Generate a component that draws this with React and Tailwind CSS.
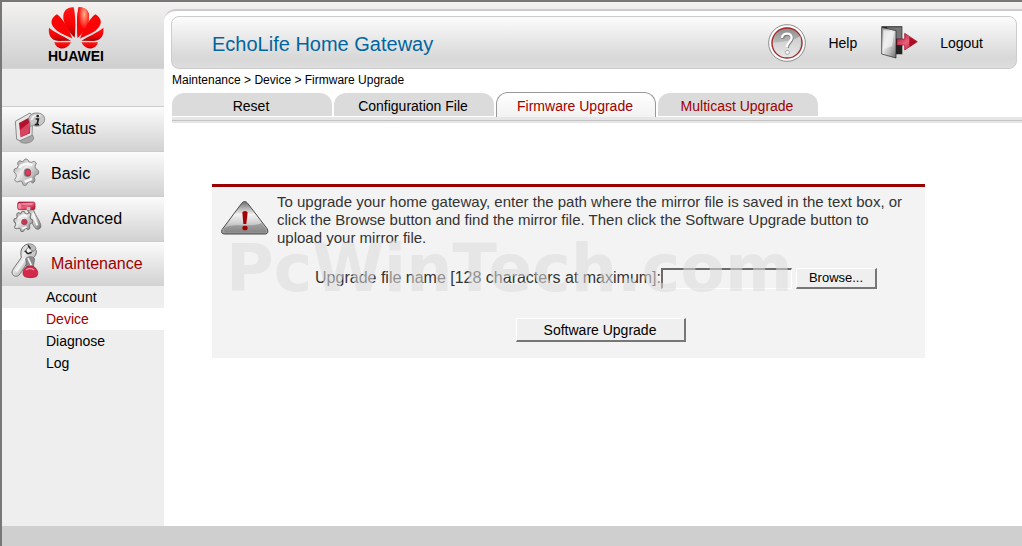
import { useState } from 'react'

const SUB_ITEMS = ['Account', 'Device', 'Diagnose', 'Log']

const TABS = ['Reset', 'Configuration File', 'Firmware Upgrade', 'Multicast Upgrade']

const GEAR = 'M71 183 Q78 174 85 183 L87 188 L94 189 Q104 182 109 191 L105 202 L108 209 Q119 212 115 224 L106 228 L103 235 Q108 247 98 251 L91 246 L84 249 Q78 264 69 256 L66 247 L60 245 Q48 252 44 241 L49 232 L48 225 Q38 218 43 209 L52 206 L55 199 Q49 188 60 184 L68 188 Z'

function Defs() {
  return (
    <svg className="absolute w-0 h-0" aria-hidden="true">
      <defs>
        <linearGradient id="steel" x1="0" y1="0" x2="1" y2="1">
          <stop offset="0" stopColor="#8c8c8c" />
          <stop offset="0.4" stopColor="#ededed" />
          <stop offset="0.7" stopColor="#b5b5b5" />
          <stop offset="1" stopColor="#6a6a6a" />
        </linearGradient>
        <linearGradient id="ruby" x1="0" y1="0" x2="1" y2="1">
          <stop offset="0" stopColor="#a8102f" />
          <stop offset="0.5" stopColor="#e8607c" />
          <stop offset="1" stopColor="#b00c2c" />
        </linearGradient>
        <linearGradient id="petal" x1="0" y1="0" x2="0" y2="1">
          <stop offset="0" stopColor="#fb1a1a" />
          <stop offset="0.6" stopColor="#f80000" />
          <stop offset="1" stopColor="#9c0b0b" />
        </linearGradient>
        <radialGradient id="glow" cx="0.6" cy="0.22" r="0.5">
          <stop offset="0" stopColor="#ffb38a" />
          <stop offset="1" stopColor="#fa0505" />
        </radialGradient>
        <linearGradient id="glass" x1="0" y1="0" x2="0" y2="1">
          <stop offset="0" stopColor="#8a8a8a" />
          <stop offset="0.6" stopColor="#c9c9c9" />
          <stop offset="1" stopColor="#ededed" />
        </linearGradient>
        <linearGradient id="warn" x1="0" y1="0" x2="0" y2="1">
          <stop offset="0" stopColor="#6e6e6e" />
          <stop offset="0.4" stopColor="#f2f2f2" />
          <stop offset="0.65" stopColor="#d2d2d2" />
          <stop offset="1" stopColor="#8b8b8b" />
        </linearGradient>
      </defs>
    </svg>
  )
}

function Petals({ top }) {
  return (
    <>
      <path d="M222 112 C226 80 224 40 219 21 C199 20 186 32 188 54 C190 74 206 98 222 112 Z" fill={top} />
      <path d="M215 115 C205 86 186 54 169 42 C152 52 148 66 158 80 C170 98 200 106 215 115 Z" fill="#fa0505" />
      <path d="M211 121 C190 108 162 96 145 82 C142 102 150 120 174 122 Z" fill="url(#petal)" />
      <path d="M211 126 L161 126 C166 144 184 149 197 141 C204 137 208 131 211 126 Z" fill="url(#petal)" />
    </>
  )
}

function Logo() {
  return (
    <a href="#home" className="flex flex-col items-center w-[148px] font-bold text-sm leading-3 text-black">
      <svg width="56" height="42" viewBox="142 17 168 126" className="overflow-visible" aria-hidden="true">
        <Petals top="url(#petal)" />
        <g transform="translate(453 0) scale(-1 1)">
          <Petals top="#fa0505" />
        </g>
        <path d="M231 112 C227 80 229 40 234 21 C254 20 267 32 265 54 C263 74 247 98 231 112 Z" fill="url(#glow)" />
      </svg>
      <span className="mt-0.5">HUAWEI</span>
    </a>
  )
}

function StatusIcon() {
  return (
    <svg width="37" height="37" viewBox="30 32 111 111" className="overflow-visible" aria-hidden="true">
      <path d="M58 120 C56 130 72 134 86 130 C100 126 104 118 98 108 L84 104 Z" fill="#a6a6a6" stroke="#777" strokeWidth="2" />
      <path d="M46 66 L90 41 L98 50 L96 108 L60 124 L50 120 Z" fill="#e6e6e6" stroke="#8a8a8a" strokeWidth="3" />
      <path d="M57 71 L92 52 L90 102 L62 114 Z" fill="#b3122f" />
      <path d="M60 92 L90 68 L88 101 L63 112 Z" fill="#d84560" />
      <path d="M90 82 L90 70 C80 54 92 40 112 41 C130 42 138 54 132 68 C126 80 108 84 99 77 Z" fill="#c8c8c8" stroke="#8e8e8e" strokeWidth="3" />
      <path d="M95 62 C97 48 108 46 122 49" fill="none" stroke="#f3f3f3" strokeWidth="5" />
      <path d="M107 59 H115 L111 76 M104 76 H117" fill="none" stroke="#1c1c1c" strokeWidth="5" />
      <circle cx="113" cy="50" r="4" fill="#1c1c1c" />
    </svg>
  )
}

function BasicIcon() {
  return (
    <svg width="37" height="37" viewBox="30 167 111 111" className="overflow-visible" aria-hidden="true">
      <path d={GEAR} fill="url(#steel)" stroke="#858585" strokeWidth="3" />
      <path d="M58 206 C64 194 82 190 96 198" fill="none" stroke="#fafafa" strokeWidth="7" />
      <path d="M74 247 L96 238" stroke="#f5f5f5" strokeWidth="8" />
      <ellipse cx="82" cy="220" rx="11" ry="13" fill="#8a8a8a" />
      <ellipse cx="84" cy="220" rx="8" ry="10" fill="#d8405c" stroke="#a5203c" strokeWidth="2" />
    </svg>
  )
}

function AdvancedIcon() {
  return (
    <svg width="37" height="37" viewBox="30 302 111 111" className="overflow-visible" aria-hidden="true">
      <path d="M82 330 C90 322 100 326 102 336 C106 348 118 362 122 376 C124 388 116 392 108 388 C100 382 94 366 90 350 Z" fill="url(#steel)" stroke="#777" strokeWidth="3" />
      <path d="M98 342 L112 378" stroke="#f5f5f5" strokeWidth="6" />
      <rect x="53" y="308" width="52" height="23" rx="5" fill="url(#ruby)" stroke="#a01030" strokeWidth="2" />
      <path d="M64 314 H98" stroke="#f4a3b3" strokeWidth="4" />
      <ellipse cx="59" cy="320" rx="5" ry="9" fill="#f08a9d" />
      <rect x="80" y="323" width="11" height="9" fill="#c4c4c4" />
      <g transform="translate(10 200) scale(0.76)">
        <path d={GEAR} fill="url(#steel)" stroke="#777" strokeWidth="4" />
        <path d="M58 208 C66 194 84 192 94 200 M74 247 L92 240" fill="none" stroke="#f8f8f8" strokeWidth="7" />
        <circle cx="83" cy="221" r="11" fill="#cf3450" stroke="#8d4050" strokeWidth="3" />
      </g>
    </svg>
  )
}

function MaintenanceIcon() {
  return (
    <svg width="37" height="37" viewBox="30 437 111 111" className="overflow-visible" aria-hidden="true">
      <path d="M84 434 L90 438 L78 452 L80 462 L92 464 L103 446 L109 454 C110 468 102 478 88 480 C82 488 68 516 56 528 C48 534 36 530 36 518 C38 508 56 488 64 474 C60 456 64 438 84 434 Z" fill="url(#steel)" stroke="#6e6e6e" strokeWidth="3" />
      <path d="M84 434 C96 432 106 438 108 448 L101 456 L92 452 L86 444 Z" fill="#bdbdbd" stroke="#6e6e6e" strokeWidth="2" />
      <path d="M48 516 L76 476" stroke="#f0f0f0" strokeWidth="9" />
      <path d="M74 454 L84 463 L95 458 M84 438 L92 448" fill="none" stroke="#222" strokeWidth="4" />
      <path d="M77 478 C84 470 98 470 104 478 L100 504 H80 Z" fill="#8b8b8b" stroke="#666" strokeWidth="2" />
      <path d="M84 476 L94 498" stroke="#f5f5f5" strokeWidth="5" />
      <path d="M78 504 C84 499 98 499 104 504 C115 512 116 528 108 532 C98 536 80 536 73 531 C66 524 69 510 78 504 Z" fill="#d42a4a" stroke="#a11030" strokeWidth="2" />
      <path d="M78 512 C84 506 96 506 102 512" fill="none" stroke="#f08ea0" strokeWidth="5" />
    </svg>
  )
}

function HelpIcon() {
  return (
    <svg width="38" height="38" viewBox="57 74 114 114" aria-hidden="true">
      <circle cx="114" cy="131" r="55" fill="#fff" stroke="#8d8d8d" strokeWidth="3" />
      <circle cx="114" cy="131" r="48" fill="#ddd" />
      <circle cx="114" cy="131" r="45" fill="url(#glass)" stroke="#a52a2a" strokeWidth="4" />
      <path d="M72 130 C92 128 130 128 154 110 C162 140 140 172 114 173 C90 172 72 154 72 130 Z" fill="#e4e4e4" opacity="0.6" />
      <path d="M101 118 C102 101 130 101 129 117 C129 129 116 129 115 146" fill="none" stroke="#777" strokeWidth="9" />
      <path d="M99 116 C100 98 129 99 128 115 C128 127 114 128 113 145" fill="none" stroke="#fff" strokeWidth="7" />
      <circle cx="115" cy="159" r="6" fill="#fff" stroke="#888" strokeWidth="2" />
    </svg>
  )
}

function LogoutIcon() {
  return (
    <svg width="37" height="33" viewBox="395 80 111 99" aria-hidden="true">
      <path d="M396 81 H459 V165 H430 Z" fill="#222" />
      <path d="M412 84 H457 V118 H440 Z" fill="#777" />
      <path d="M397 84 L440 94 V176 L397 164 Z" fill="url(#steel)" stroke="#222" strokeWidth="2" />
      <path d="M402 92 L434 99 L428 140 L402 150 Z" fill="#f0f0f0" opacity="0.8" />
      <path d="M443 119 H466 V102 L504 127 L466 152 V137 H443 Z" fill="url(#ruby)" stroke="#a30d22" strokeWidth="2" />
      <path d="M480 112 L503 127 L480 143 Z" fill="#ad0d20" />
    </svg>
  )
}

function WarningIcon() {
  return (
    <svg width="48" height="34" viewBox="62 80 144 102" className="shrink-0" aria-hidden="true">
      <path d="M124 87 Q133 76 142 87 L201 164 Q206 177 196 179 H72 Q60 178 65 166 Z" fill="url(#warn)" stroke="#4b4b4b" strokeWidth="3" />
      <path d="M72 162 C92 144 160 160 184 146 L197 166 Q200 174 190 174 H76 Q68 172 72 162 Z" fill="#777" opacity="0.5" />
      <path d="M126 114 Q134 106 142 114 L138 149 H129 Z" fill="#a80000" />
      <ellipse cx="134" cy="161" rx="8" ry="7" fill="#a80000" />
    </svg>
  )
}

const MENU = [
  { name: 'Status', Icon: StatusIcon },
  { name: 'Basic', Icon: BasicIcon },
  { name: 'Advanced', Icon: AdvancedIcon },
  { name: 'Maintenance', Icon: MaintenanceIcon },
]

function Sidebar() {
  return (
    <aside className="w-[162px] shrink-0 bg-[#eeeeee]">
      <div className="h-[67px] pt-1 bg-linear-to-b from-[#f3f2f1] to-[#cfcfcf] border-b border-[#d6d6d6]">
        <Logo />
      </div>
      <nav className="mt-[37px]">
        {MENU.map(({ name, Icon }) => (
          <a key={name} href={`#${name.toLowerCase()}`}
            className={`flex items-center gap-1 h-[45px] pl-2 pb-px border-t border-[#cccccc] bg-linear-to-b from-[#fbfbfb] to-[#d2d2d2] text-base ${
              name === 'Maintenance' ? 'text-[#a00000]' : 'text-black'
            }`}>
            <Icon />
            {name}
          </a>
        ))}
        <ul>
          {SUB_ITEMS.map(item => (
            <li key={item}>
              <a href={`#${item.toLowerCase()}`}
                className={`block pl-11 text-sm leading-[22px] ${item === 'Device' ? 'bg-white text-[#a00000]' : 'text-black'}`}>
                {item}
              </a>
            </li>
          ))}
        </ul>
      </nav>
    </aside>
  )
}

function Tabs() {
  return (
    <div>
      <nav className="flex items-end gap-0.5 h-[25px]">
        {TABS.map((tab, i) => (
          <a key={tab} href={`#tab-${i + 1}`}
            className={`w-40 pr-0.5 text-center text-sm ${
              tab === 'Firmware Upgrade'
                ? 'h-[25px] leading-[26px] rounded-t-xl border border-b-0 border-[#999999] bg-linear-to-b from-white to-[#f2f2f2] text-[#a00000]'
                : 'h-6 leading-[26px] rounded-t-xl bg-[#dbdbdb] border-b border-white'
            } ${tab === 'Multicast Upgrade' ? 'text-[#a00000]' : ''}`}>
            {tab}
          </a>
        ))}
      </nav>
      <div className="h-1.5 border-t-3 border-b-2 border-[#e6e6e6] bg-[#c4c4c4]" />
    </div>
  )
}

function UpgradeForm() {
  const [fileName, setFileName] = useState('')

  return (
    <form onSubmit={e => e.preventDefault()}
      className="relative mt-[61px] ml-10 mr-[97px] pb-4 border-t-3 border-[#990000] bg-[#f3f3f3] text-[#333333]">
      <div className="flex pt-[6px] pl-[9px] pr-4 gap-2">
        <div className="pt-2">
          <WarningIcon />
        </div>
        <p className="text-[15px] leading-[18px]">
          To upgrade your home gateway, enter the path where the mirror file is saved in the text box, or click
          the Browse button and find the mirror file. Then click the Software Upgrade button to upload your
          mirror file.
        </p>
      </div>
      <div className="flex items-center justify-end pr-12 mt-5">
        <label htmlFor="upgrade-file" className="text-base leading-[22px] whitespace-nowrap">
          Upgrade file name [128 characters at maximum]:
        </label>
        <input id="upgrade-file" type="text" value={fileName} onChange={e => setFileName(e.target.value)}
          className="w-[131px] h-[21px] px-1 text-sm bg-[#f3f3f3] border-t-2 border-l-2 border-b border-r border-t-[#6b6b6b] border-l-[#6b6b6b] border-b-white border-r-white outline-none" />
        <button type="button"
          className="w-[81px] h-[21px] ml-1 bg-[#efefef] border-t border-l border-b-2 border-r-2 border-t-white border-l-white border-b-[#777777] border-r-[#777777] text-[13px] leading-4 text-black">
          Browse...
        </button>
      </div>
      <div className="flex justify-center pl-16 mt-[29px]">
        <button type="submit"
          className="w-[170px] h-6 bg-[#efefef] border-t border-l border-b-2 border-r-2 border-t-white border-l-white border-b-[#777777] border-r-[#777777] text-sm leading-5 text-black">
          Software Upgrade
        </button>
      </div>
      <span className="absolute left-3.5 top-11 pointer-events-none select-none whitespace-nowrap font-['DejaVu_Sans'] font-bold text-[65px] leading-[76px] text-[#dddddd] opacity-55">
        PcWinTech.com
      </span>
    </form>
  )
}

export default function App() {
  return (
    <div className="flex flex-col min-h-screen border-t-2 border-l-2 border-[#777777] bg-white font-['Liberation_Sans',Arial,sans-serif] text-black">
      <Defs />
      <div className="flex flex-1">
        <Sidebar />
        <div className="flex flex-col flex-1 min-w-0 pt-[7px] bg-linear-to-b from-[#f3f2f1] to-[#d0d0d0] bg-[length:100%_67px] bg-no-repeat">
          <main className="flex-1 pl-2 pt-[5px] bg-white border-t-2 border-[#cccccc] rounded-tl-xl">
            <header className="flex items-center h-[53px] mr-[5px] -ml-px pl-10 pr-[33px] rounded-lg border border-[#cccccc] bg-linear-to-b from-[#fcfcfc] via-[#d8d8d8] via-80% to-[#dddddd]">
              <h1 className="flex-1 pt-0.5 text-xl text-[#0066a1]">EchoLife Home Gateway</h1>
              <a href="#help" className="flex items-center gap-[22px] text-sm">
                <HelpIcon />
                Help
              </a>
              <a href="#logout" className="flex items-center gap-[22px] ml-6 text-sm">
                <LogoutIcon />
                Logout
              </a>
            </header>
            <p className="pt-[3px] pb-1 text-xs leading-4">Maintenance &gt; Device &gt; Firmware Upgrade</p>
            <Tabs />
            <UpgradeForm />
          </main>
        </div>
      </div>
      <footer className="h-5 bg-[#cfcfcf]" />
    </div>
  )
}
